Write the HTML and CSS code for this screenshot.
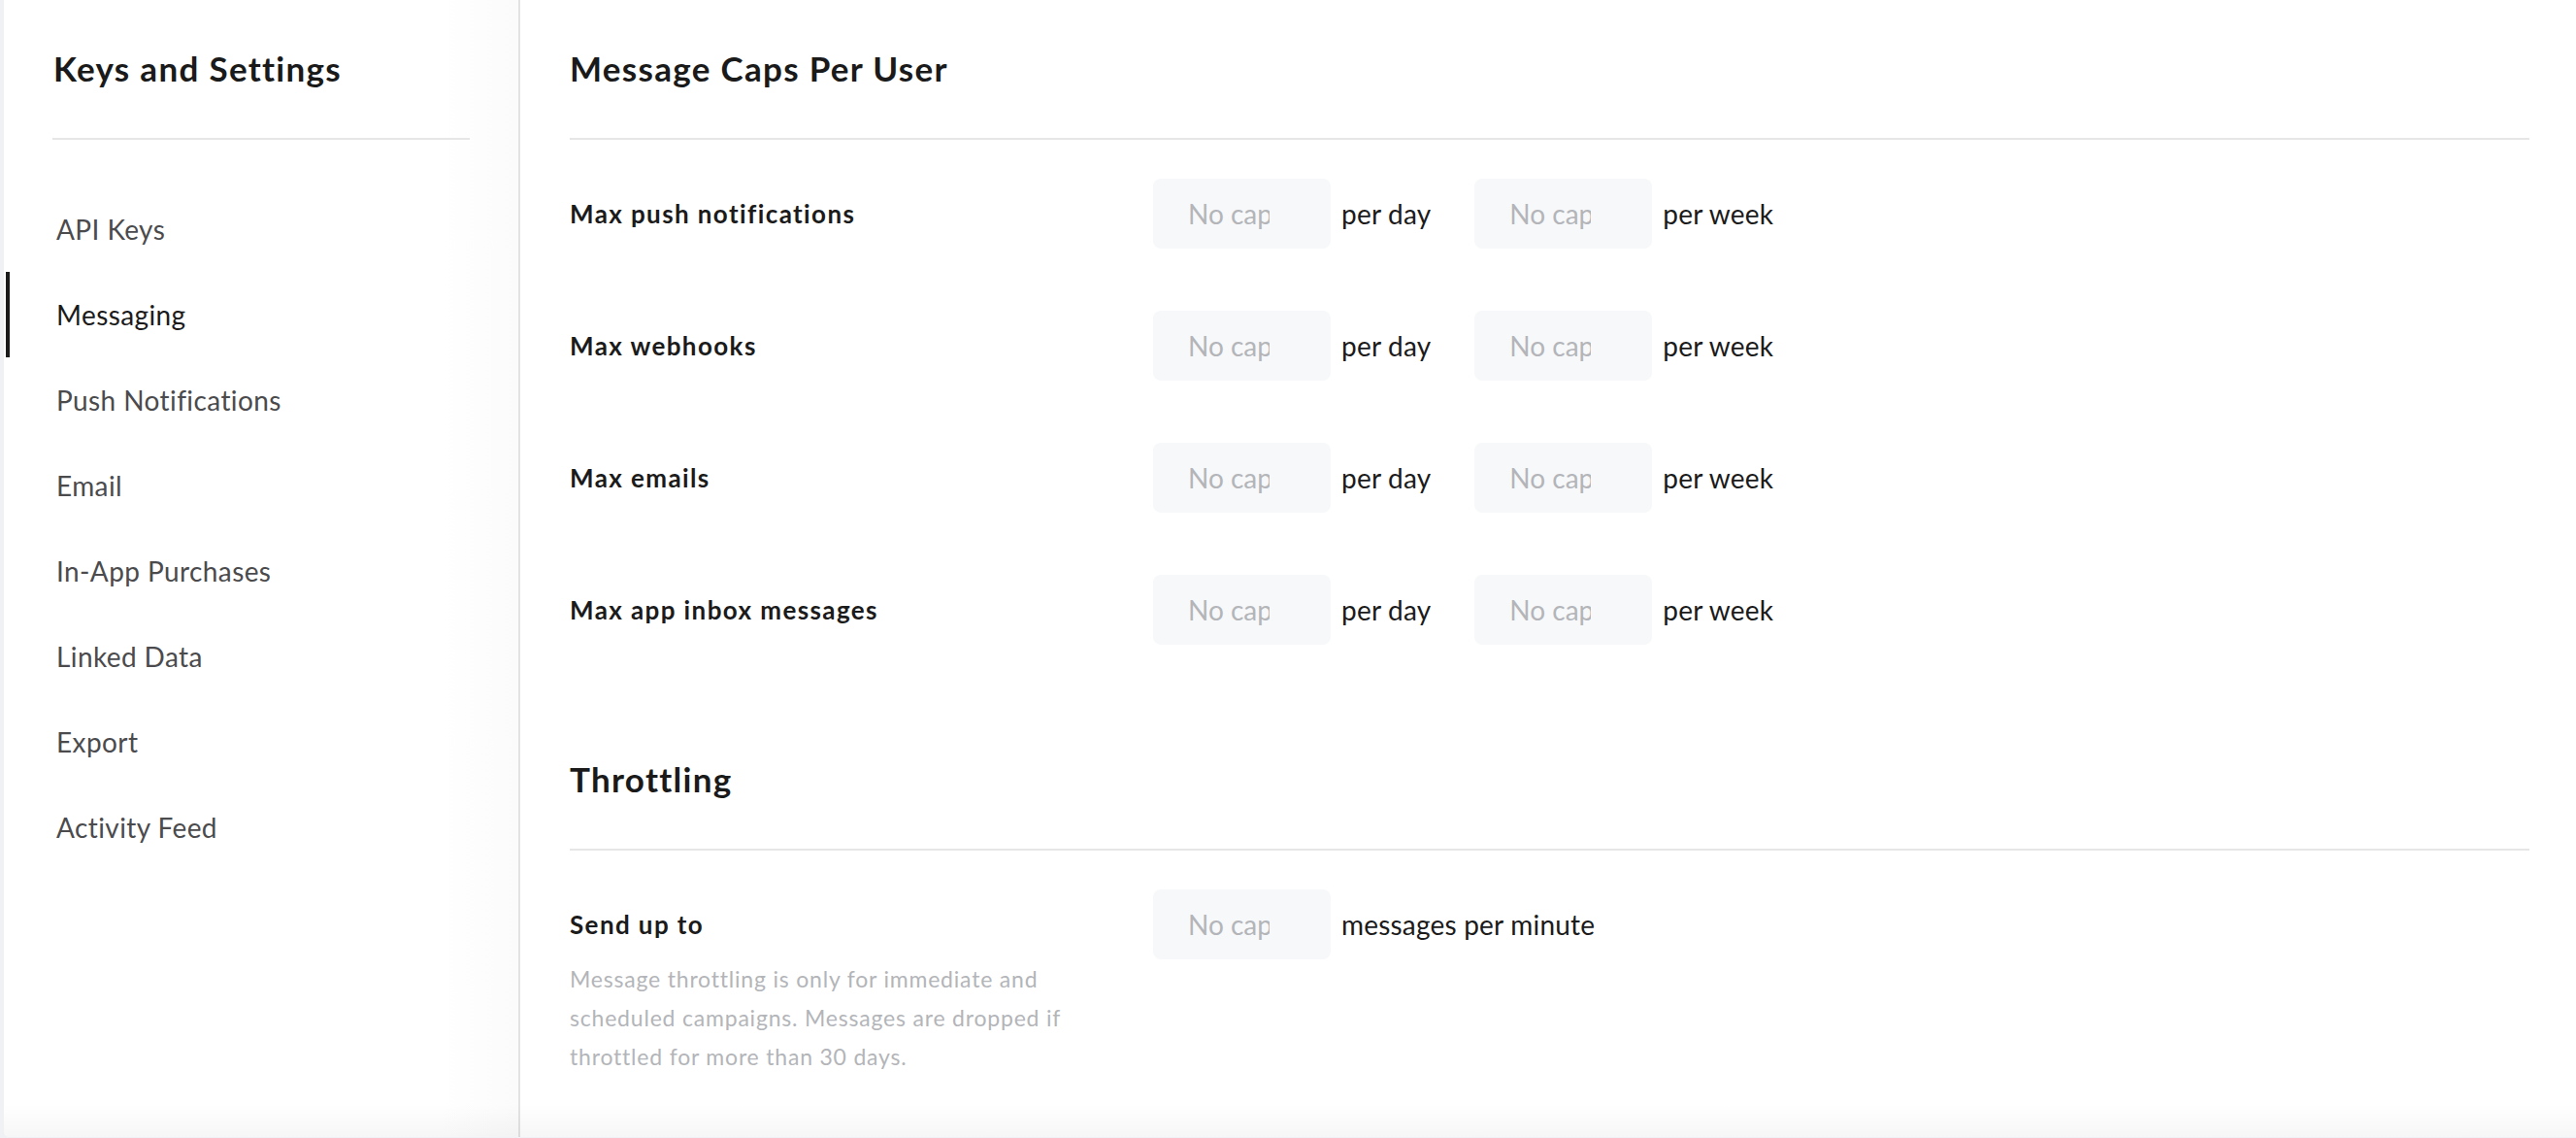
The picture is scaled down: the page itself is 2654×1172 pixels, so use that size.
FILE: index.html
```html
<!DOCTYPE html>
<html lang="en">
<head>
<meta charset="utf-8">
<title>Keys and Settings</title>
<link rel="stylesheet" href="styles.css">
</head>
<body>
<div class="app">
  <aside class="sidebar">
    <div class="sidebar-head">
      <h2 class="title">Keys and Settings</h2>
    </div>
    <nav class="nav">
      <a class="nav-item">API Keys</a>
      <a class="nav-item active">Messaging</a>
      <a class="nav-item">Push Notifications</a>
      <a class="nav-item">Email</a>
      <a class="nav-item">In-App Purchases</a>
      <a class="nav-item">Linked Data</a>
      <a class="nav-item">Export</a>
      <a class="nav-item">Activity Feed</a>
    </nav>
  </aside>
  <main class="main">
    <section class="section">
      <div class="section-head">
        <h2 class="title">Message Caps Per User</h2>
      </div>
      <div class="rows">
        <div class="row">
          <div class="label-col"><div class="label">Max push notifications</div></div>
          <div class="fields">
            <input class="cap-input" type="text" placeholder="No cap"><span class="unit">per day</span>
            <input class="cap-input" type="text" placeholder="No cap"><span class="unit">per week</span>
          </div>
        </div>
        <div class="row">
          <div class="label-col"><div class="label">Max webhooks</div></div>
          <div class="fields">
            <input class="cap-input" type="text" placeholder="No cap"><span class="unit">per day</span>
            <input class="cap-input" type="text" placeholder="No cap"><span class="unit">per week</span>
          </div>
        </div>
        <div class="row">
          <div class="label-col"><div class="label">Max emails</div></div>
          <div class="fields">
            <input class="cap-input" type="text" placeholder="No cap"><span class="unit">per day</span>
            <input class="cap-input" type="text" placeholder="No cap"><span class="unit">per week</span>
          </div>
        </div>
        <div class="row">
          <div class="label-col"><div class="label">Max app inbox messages</div></div>
          <div class="fields">
            <input class="cap-input" type="text" placeholder="No cap"><span class="unit">per day</span>
            <input class="cap-input" type="text" placeholder="No cap"><span class="unit">per week</span>
          </div>
        </div>
      </div>
    </section>
    <section class="section section-throttle">
      <div class="section-head">
        <h2 class="title">Throttling</h2>
      </div>
      <div class="rows">
        <div class="row">
          <div class="label-col">
            <div class="label">Send up to</div>
            <p class="help">Message throttling is only for immediate and scheduled campaigns. Messages are dropped if throttled for more than 30 days.</p>
          </div>
          <div class="fields">
            <input class="cap-input" type="text" placeholder="No cap"><span class="unit">messages per minute</span>
          </div>
        </div>
      </div>
    </section>
  </main>
  <div class="bottom-fade"></div>
</div>
</body>
</html>
```

FILE: styles.css
```css
html, body {
  margin: 0;
  padding: 0;
}

body {
  background: #eff1f4;
  font-family: Lato, "Liberation Sans", sans-serif;
  color: #1b1b1b;
  overflow: hidden;
}

.app {
  position: relative;
  display: flex;
  margin-left: 4px;
  height: 1171px;
  background: #ffffff;
  border-bottom-left-radius: 6px;
  overflow: hidden;
}

.sidebar {
  width: 530px;
  flex: none;
  border-right: 2px solid #e3e3e3;
  background: linear-gradient(to right, #ffffff 85%, #fbfbfb 100%);
  box-sizing: content-box;
}

.sidebar-head {
  margin: 0 50px 0 50px;
  padding-top: 50px;
  padding-bottom: 52px;
  border-bottom: 2px solid #e6e6e6;
}

.title {
  margin: 0;
  font-size: 35px;
  line-height: 40px;
  font-weight: 700;
  color: #1a1a1a;
  letter-spacing: 1.3px;
}

.sidebar-head .title {
  padding-left: 1px;
}

.nav {
  display: flex;
  flex-direction: column;
  margin-top: 48px;
}

.nav-item {
  position: relative;
  display: block;
  height: 88px;
  line-height: 88px;
  padding-left: 54px;
  font-size: 28px;
  letter-spacing: 0.4px;
  color: #4b4b4d;
  text-decoration: none;
}

.nav-item.active {
  color: #1b1b1b;
}

.nav-item.active::before {
  content: "";
  position: absolute;
  left: 2px;
  top: 0;
  width: 4px;
  height: 88px;
  background: #1b1b1b;
}

.main {
  flex: 1;
  padding: 0 48px 0 51px;
}

.section-head {
  padding-top: 50px;
  padding-bottom: 52px;
  border-bottom: 2px solid #e6e6e6;
}

.section-throttle .section-head {
  padding-top: 0;
  margin-top: 118px;
}

.rows {
  display: flex;
  flex-direction: column;
  gap: 64px;
  padding-top: 40px;
}

.row {
  display: flex;
  align-items: flex-start;
}

.label-col {
  width: 601px;
  flex: none;
}

.label {
  font-size: 26px;
  line-height: 72px;
  font-weight: 700;
  letter-spacing: 1.4px;
  color: #1b1b1b;
}

.help {
  margin: 0;
  width: 530px;
  font-size: 23px;
  line-height: 40px;
  letter-spacing: 0.8px;
  color: #b3b5b9;
}

.fields {
  display: flex;
  align-items: center;
  height: 72px;
}

.cap-input {
  width: 183px;
  height: 72px;
  box-sizing: border-box;
  padding: 0 63px 0 36px;
  border: none;
  border-radius: 8px;
  background: #f7f8fa;
  font-family: Lato, "Liberation Sans", sans-serif;
  font-size: 28px;
  color: #1b1b1b;
  outline: none;
}

.cap-input::placeholder {
  color: #b3b5b9;
  opacity: 1;
}

.unit {
  margin-left: 11px;
  margin-right: 45px;
  font-size: 28px;
  letter-spacing: 0.2px;
  color: #1b1b1b;
  white-space: nowrap;
}

.bottom-fade {
  position: absolute;
  left: 0;
  right: 0;
  bottom: 0;
  height: 34px;
  background: linear-gradient(to bottom, rgba(0, 0, 0, 0), rgba(0, 0, 0, 0.035));
  pointer-events: none;
}
```
